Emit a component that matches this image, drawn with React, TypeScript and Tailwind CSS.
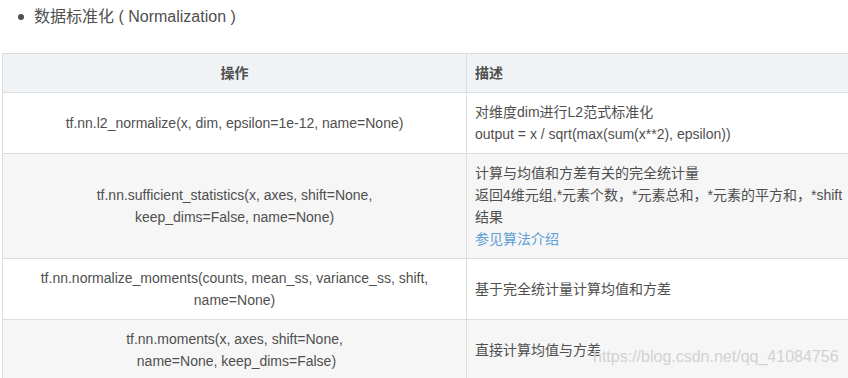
const rows = [
  {
    op: ['tf.nn.l2_normalize(x, dim, epsilon=1e-12, name=None)'],
    desc: ['对维度dim进行L2范式标准化', 'output = x / sqrt(max(sum(x**2), epsilon))'],
  },
  {
    op: ['tf.nn.sufficient_statistics(x, axes, shift=None,', 'keep_dims=False, name=None)'],
    desc: [
      '计算与均值和方差有关的完全统计量',
      '返回4维元组,*元素个数，*元素总和，*元素的平方和，*shift',
      '结果',
    ],
    link: '参见算法介绍',
  },
  {
    op: ['tf.nn.normalize_moments(counts, mean_ss, variance_ss, shift,', 'name=None)'],
    desc: ['基于完全统计量计算均值和方差'],
  },
  {
    op: ['tf.nn.moments(x, axes, shift=None,', '\u00a0name=None, keep_dims=False)'],
    desc: ['直接计算均值与方差'],
  },
];

export default function App() {
  return (
    <div
      className="relative w-[848px] h-[378px] overflow-hidden bg-white text-[#4f4f4f]"
      style={{ fontFamily: '"Liberation Sans", "Noto Sans CJK SC", sans-serif' }}
    >
      <div className="flex items-center h-[34px] pl-[18px]">
        <span className="w-[6px] h-[6px] rounded-full bg-[#4f4f4f] mr-[10px]" />
        <span className="text-[16px] leading-[24px] whitespace-pre">数据标准化 ( Normalization )</span>
      </div>

      <table className="ml-[2px] mt-[19px] w-[900px] border-collapse text-[14px] leading-[22px]">
        <thead>
          <tr className="bg-[#eff3f5]">
            <th className="w-[464px] border border-[#dddddd] px-2 py-2 text-center font-bold">操作</th>
            <th className="border border-[#dddddd] px-2 py-2 text-left font-bold">描述</th>
          </tr>
        </thead>
        <tbody>
          {rows.map((r, i) => (
            <tr key={i} className={i % 2 === 1 ? 'bg-[#f6f6f6]' : 'bg-white'}>
              <td className="border border-[#dddddd] px-2 py-2 text-center align-middle">
                {r.op.map((l) => (
                  <div key={l} className="whitespace-nowrap">{l}</div>
                ))}
              </td>
              <td className="border border-[#dddddd] px-2 py-2 text-left align-middle">
                {r.desc.map((l) => (
                  <div key={l} className="whitespace-nowrap">{l}</div>
                ))}
                {r.link && <div className="text-[#5e9fd8]">{r.link}</div>}
              </td>
            </tr>
          ))}
        </tbody>
      </table>

      <div className="absolute left-[593px] top-[346px] text-[16px] leading-[22px] text-[#d2d2d2] whitespace-nowrap">
        https://blog.csdn.net/qq_41084756
      </div>
    </div>
  );
}
